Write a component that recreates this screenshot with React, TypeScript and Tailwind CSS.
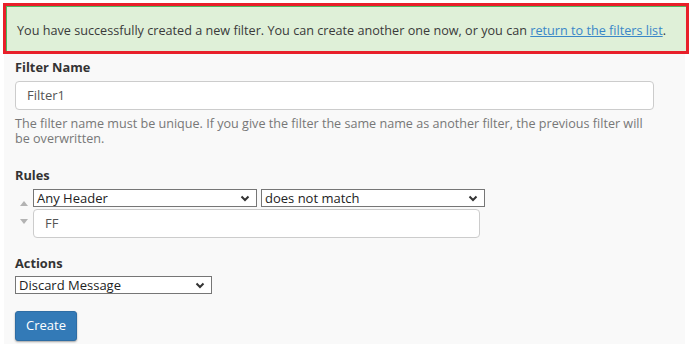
import { ReactNode } from "react";

const Chevron = () => (
  <svg width="10" height="7" viewBox="0 0 10 7" className="shrink-0">
    <path d="M1.5 1.5 L5 5 L8.5 1.5" fill="none" stroke="#333" strokeWidth="2" />
  </svg>
);

const FakeSelect = ({ value, width }: { value: string; width: string }) => (
  <div
    className={`${width} h-[18px] flex items-center justify-between bg-white border border-[#767676] pl-[3px] pr-[6px] text-[13px] leading-none text-[#222]`}
  >
    <span>{value}</span>
    <Chevron />
  </div>
);

const Label = ({ children, className }: { children: ReactNode; className?: string }) => (
  <div className={`text-[12.8px] leading-[18px] font-bold text-[#333] ${className ?? ""}`}>{children}</div>
);

const App = () => {
  return (
    <div
      className="w-[692px] h-[349px] bg-white overflow-hidden"
      style={{ fontFamily: '"Open Sans", "Liberation Sans", sans-serif' }}
    >
      {/* highlighted success message */}
      <div className="ml-[3px] mt-[3px] w-[686px] h-[51px] border-[3px] border-[#e8202a]">
        <div className="h-full bg-[#dff0d8] border-t border-l border-[#4cb860] flex items-center pl-[10px] pt-[2px] text-[12.65px] text-[#3a3a3a]">
          <span>
            You have successfully created a new filter. You can create another one now, or you can{" "}
            <a href="#" className="text-[#3a87c8] underline">
              return to the filters list
            </a>
            .
          </span>
        </div>
      </div>

      <div className="ml-[4px] w-[681px] h-[290px] bg-[#f9f9f9] pl-[11px] pt-[4px]">
        <Label>Filter Name</Label>
        <div className="mt-[5px] w-[639px] h-[29px] bg-white border border-[#cccccc] rounded-[4px] flex items-center pl-[11px] text-[13px] text-[#555]">
          Filter1
        </div>
        <p className="mt-[6px] w-[640px] text-[12.6px] leading-[15px] text-[#777]">
          The filter name must be unique. If you give the filter the same name as another filter, the previous filter will
          be overwritten.
        </p>

        <Label className="mt-[20px]">Rules</Label>
        <div className="mt-[5px] flex">
          <div className="w-[18px] flex flex-col items-center pt-[12px] gap-[13px]">
            <svg width="8" height="5" viewBox="0 0 8 5">
              <path d="M0 5 L4 0 L8 5 Z" fill="#b3b3b3" />
            </svg>
            <svg width="8" height="5" viewBox="0 0 8 5">
              <path d="M0 0 L4 5 L8 0 Z" fill="#b3b3b3" />
            </svg>
          </div>
          <div>
            <div className="flex gap-[4px]">
              <FakeSelect value="Any Header" width="w-[224px]" />
              <FakeSelect value="does not match" width="w-[224px]" />
            </div>
            <div className="mt-[2px] w-[447px] h-[29px] bg-white border border-[#cccccc] rounded-[4px] flex items-center pl-[11px] text-[13px] text-[#555]">
              FF
            </div>
          </div>
        </div>

        <Label className="mt-[16px]">Actions</Label>
        <div className="mt-[4px]">
          <FakeSelect value="Discard Message" width="w-[197px]" />
        </div>

        <button className="mt-[17px] w-[62px] h-[30px] bg-[#337ab7] border border-[#2e6da4] rounded-[3px] text-white text-[13px] shadow-[0_1px_2px_rgba(0,0,0,0.35)]">
          Create
        </button>
      </div>
    </div>
  );
};

export default App;
